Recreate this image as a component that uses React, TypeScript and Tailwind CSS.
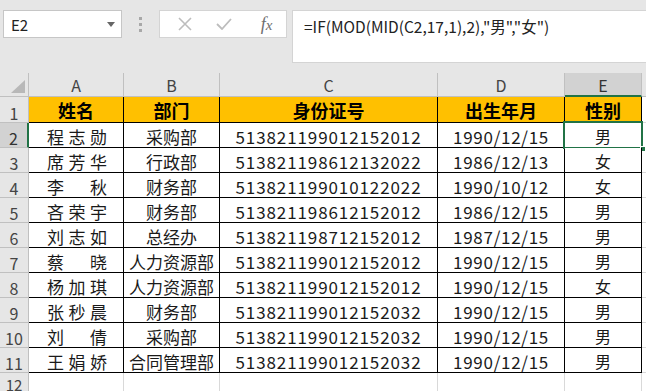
import React from "react";

const rows: [string, string, string, string, string][] = [
  ["程志勋", "采购部", "513821199012152012", "1990/12/15", "男"],
  ["席芳华", "行政部", "513821198612132022", "1986/12/13", "女"],
  ["李秋", "财务部", "513821199010122022", "1990/10/12", "女"],
  ["吝荣宇", "财务部", "513821198612152012", "1986/12/15", "男"],
  ["刘志如", "总经办", "513821198712152012", "1987/12/15", "男"],
  ["蔡晓", "人力资源部", "513821199012152012", "1990/12/15", "男"],
  ["杨加琪", "人力资源部", "513821199012152012", "1990/12/15", "女"],
  ["张秒晨", "财务部", "513821199012152032", "1990/12/15", "男"],
  ["刘倩", "采购部", "513821199012152032", "1990/12/15", "男"],
  ["王娟娇", "合同管理部", "513821199012152032", "1990/12/15", "男"],
];

const colLetters = ["A", "B", "C", "D", "E"];

export default function App() {
  return (
    <div className="w-[646px] h-[391px] overflow-hidden bg-[#e6e6e6] font-['Noto_Sans_CJK_SC',sans-serif] text-[#1a1a1a]">
      {/* toolbar */}
      <div className="h-[73px] flex items-start pt-[10px] pl-[3px]">
        <div className="w-[119px] h-[28px] bg-white border border-[#c6c6c6] flex items-center justify-between pl-[7px] pr-[6px]">
          <span className="text-[15px] text-[#222] leading-none">E2</span>
          <svg width="8" height="5" viewBox="0 0 8 5"><path d="M0 0h8L4 5z" fill="#666" /></svg>
        </div>
        <div className="w-[37px] h-[28px] flex flex-col items-center justify-center gap-[3px]">
          <div className="w-[3px] h-[3px] bg-[#a8a8a8]" />
          <div className="w-[3px] h-[3px] bg-[#a8a8a8]" />
          <div className="w-[3px] h-[3px] bg-[#a8a8a8]" />
        </div>
        <div className="w-[128px] h-[28px] bg-white border border-[#d4d4d4] flex items-center">
          <div className="w-[45px] flex justify-center pl-[4px]">
            <svg width="14" height="14" viewBox="0 0 14 14"><path d="M1 1L13 13M13 1L1 13" stroke="#bdbdbd" strokeWidth="1.6" /></svg>
          </div>
          <div className="w-[38px] flex justify-center">
            <svg width="16" height="12" viewBox="0 0 16 12"><path d="M1 6L6 11L15 1" stroke="#bdbdbd" strokeWidth="1.8" fill="none" /></svg>
          </div>
          <div className="flex-1 flex justify-center pl-[4px]">
            <span className="font-['Liberation_Serif',serif] italic text-[18px] text-[#6e6e6e] leading-none">
              f<span className="text-[15px]">x</span>
            </span>
          </div>
        </div>
        <div className="w-[5px]" />
        <div className="flex-1 h-[53px] bg-white border border-r-0 border-[#d4d4d4] pl-[11px] pt-[3px]">
          <span className="text-[15.5px] text-[#222] leading-none">=IF(MOD(MID(C2,17,1),2),"男","女")</span>
        </div>
      </div>

      {/* grid */}
      <div className="grid grid-cols-[29px_95px_96px_218px_127px_77px_4px] grid-rows-[24px_26px_repeat(10,25px)_18px]">
        {/* header row */}
        <div className="relative bg-[#e6e6e6] border-r border-b border-[#c0c0c0]">
          <svg className="absolute right-[3px] bottom-[3px]" width="14" height="13" viewBox="0 0 14 13"><path d="M14 0V13H0z" fill="#b8b8b8" /></svg>
        </div>
        {colLetters.map((c) => (
          <div
            key={c}
            className={
              c === "E"
                ? "bg-[#d2d2d2] border-r border-[#c0c0c0] border-b-2 border-b-[#217346] flex items-end justify-center pb-[1px] text-[16px] text-[#333] leading-none"
                : "bg-[#e6e6e6] border-r border-b border-[#c0c0c0] flex items-end justify-center pb-[2px] text-[16px] text-[#444] leading-none"
            }
          >
            <span className="pb-[1px]">{c}</span>
          </div>
        ))}
        <div className="bg-[#e6e6e6] border-b border-[#c0c0c0]" />

        {/* row 1 header */}
        <div className="bg-[#e6e6e6] border-r border-b border-[#c0c0c0] flex items-end justify-center pb-[1px] text-[16px] text-[#444] leading-none">
          <span>1</span>
        </div>
        {["姓名", "部门", "身份证号", "出生年月", "性别"].map((h) => (
          <div key={h} className="bg-[#ffc000] border-r border-b border-black flex items-center justify-center pt-[1px] text-[18px] font-bold text-black leading-none">
            {h}
          </div>
        ))}
        <div className="bg-white border-b border-[#d9d9d9]" />

        {rows.map((r, i) => {
          const n = i + 2;
          const sel = n === 2;
          return (
            <React.Fragment key={n}>
              <div
                className={
                  sel
                    ? "bg-[#d2d2d2] border-r-2 border-r-[#217346] border-b border-b-[#c0c0c0] flex items-end justify-center pb-[1px] text-[16px] text-[#333] leading-none"
                    : "bg-[#e6e6e6] border-r border-b border-[#c0c0c0] flex items-end justify-center pb-[1px] text-[16px] text-[#444] leading-none"
                }
              >
                <span>{n}</span>
              </div>
              <div className="bg-white border-r border-b border-black flex items-center justify-between pl-[18px] pr-[16px] pt-[2px] text-[17px] leading-none">
                {r[0].split("").map((ch, k) => (
                  <span key={k}>{ch}</span>
                ))}
              </div>
              <div className="bg-white border-r border-b border-black flex items-center justify-center pt-[2px] text-[17px] leading-none">
                {r[1]}
              </div>
              <div className="bg-white border-r border-b border-black flex items-center justify-center pt-[2px] text-[17px] tracking-[0.9px] leading-none">
                {r[2]}
              </div>
              <div className="bg-white border-r border-b border-black flex items-center justify-center pt-[2px] text-[17px] tracking-[0.7px] leading-none">
                {r[3]}
              </div>
              <div className="relative bg-white border-r border-b border-black flex items-center justify-center pt-[2px] text-[16px] leading-none">
                {r[4]}
                {sel && (
                  <>
                    <div className="absolute left-[-2px] top-[-2px] right-[-2px] bottom-[-2px] border-2 border-[#217346]" />
                    <div className="absolute right-[-5px] bottom-[-5px] w-[6px] h-[6px] bg-[#217346] border border-white" />
                  </>
                )}
              </div>
              <div className="bg-white border-b border-[#d9d9d9]" />
            </React.Fragment>
          );
        })}

        {/* row 12 */}
        <div className="bg-[#e6e6e6] border-r border-[#c0c0c0] flex items-start justify-center pt-[4px] text-[15px] text-[#444] leading-none">
          <span>12</span>
        </div>
        <div className="bg-white border-r border-[#d9d9d9]" />
        <div className="bg-white border-r border-[#d9d9d9]" />
        <div className="bg-white border-r border-[#d9d9d9]" />
        <div className="bg-white border-r border-[#d9d9d9]" />
        <div className="bg-white border-r border-[#d9d9d9]" />
        <div className="bg-white" />
      </div>
    </div>
  );
}
